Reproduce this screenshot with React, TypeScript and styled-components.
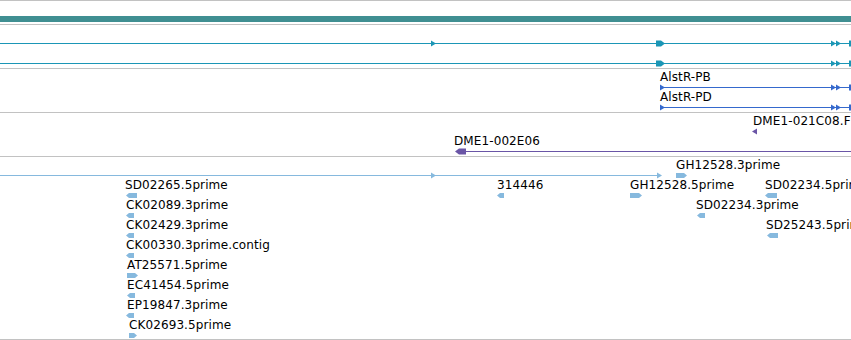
import styled, { createGlobalStyle } from 'styled-components';

const GlobalStyle = createGlobalStyle`
  html, body {
    margin: 0;
    padding: 0;
    background: #ffffff;
    overflow: hidden;
  }
`;

const colors = {
  rule: '#c2c2c2',
  scale: '#408f92',
  gene: '#1b96b6',
  mrna: '#3569cd',
  clone: '#6a55a6',
  est: '#86b9de',
  text: '#000000',
};

const Browser = styled.div`
  width: 851px;
  height: 339px;
  border-top: 1px solid ${colors.rule};
  display: flex;
  flex-direction: column;
  overflow: hidden;
  background: #fff;
`;

const Track = styled.div<{ $h: number }>`
  position: relative;
  flex: 0 0 auto;
  height: ${({ $h }) => $h}px;
  border-bottom: 1px solid ${colors.rule};
  overflow: hidden;
`;

const Canvas = styled.svg`
  position: absolute;
  left: 0;
  top: 0;
  width: 851px;
  height: 100%;
  display: block;
`;

const Label = styled.span<{ $x: number; $row: number }>`
  position: absolute;
  left: ${({ $x }) => $x}px;
  top: ${({ $row }) => $row * 20 + 1}px;
  font-family: 'DejaVu Sans', 'Liberation Sans', sans-serif;
  font-size: 12px;
  line-height: 14px;
  letter-spacing: 0.1px;
  color: ${colors.text};
  white-space: nowrap;
`;

// y is the top pixel row of the 1px feature line
const rowY = (row: number) => 18 + row * 20;

function HLine({ x1, x2, row, color }: { x1: number; x2: number; row: number; color: string }) {
  return <rect x={x1} y={rowY(row)} width={x2 - x1} height={1} fill={color} />;
}

function Tri({ x, row, dir = 1, color }: { x: number; row: number; dir?: 1 | -1; color: string }) {
  const y = rowY(row);
  const pts =
    dir === 1
      ? `${x},${y - 2.5} ${x + 5},${y + 0.5} ${x},${y + 3.5}`
      : `${x + 5},${y - 2.5} ${x},${y + 0.5} ${x + 5},${y + 3.5}`;
  return <polygon points={pts} fill={color} />;
}

function Wedge({ x, w, row, dir = 1, color }: { x: number; w: number; row: number; dir?: 1 | -1; color: string }) {
  const y = rowY(row);
  const t = 4;
  const pts =
    dir === 1
      ? `${x},${y - 2.5} ${x + w - t},${y - 2.5} ${x + w},${y + 0.5} ${x + w - t},${y + 3.5} ${x},${y + 3.5}`
      : `${x + w},${y - 2.5} ${x + t},${y - 2.5} ${x},${y + 0.5} ${x + t},${y + 3.5} ${x + w},${y + 3.5}`;
  return <polygon points={pts} fill={color} />;
}

function Est({ x, w, row, dir, color = colors.est }: { x: number; w: number; row: number; dir: 1 | -1; color?: string }) {
  const y = rowY(row);
  const t = 3;
  const pts =
    dir === 1
      ? `${x},${y - 2} ${x + w - t},${y - 2} ${x + w},${y + 0.5} ${x + w - t},${y + 3} ${x},${y + 3}`
      : `${x + w},${y - 2} ${x + t},${y - 2} ${x},${y + 0.5} ${x + t},${y + 3} ${x + w},${y + 3}`;
  return <polygon points={pts} fill={color} />;
}

function EndBar({ x, row, color }: { x: number; row: number; color: string }) {
  return <rect x={x} y={rowY(row) - 2.5} width={2} height={6} fill={color} />;
}

function RightEnd({ row, color }: { row: number; color: string }) {
  return (
    <>
      <Tri x={831} row={row} color={color} />
      <Tri x={836} row={row} color={color} />
      <EndBar x={849} row={row} color={color} />
    </>
  );
}

const ests: { label: string; x: number; lx?: number; w: number; row: number; dir: 1 | -1 }[] = [
  { label: 'GH12528.3prime', x: 676, w: 11, row: 0, dir: 1 },
  { label: 'SD02265.5prime', x: 126, lx: 125, w: 11, row: 1, dir: -1 },
  { label: '314446', x: 497, w: 7, row: 1, dir: -1 },
  { label: 'GH12528.5prime', x: 630, w: 12, row: 1, dir: 1 },
  { label: 'SD02234.5prime', x: 765, w: 12, row: 1, dir: -1 },
  { label: 'CK02089.3prime', x: 126, w: 8, row: 2, dir: -1 },
  { label: 'SD02234.3prime', x: 697, lx: 696, w: 8, row: 2, dir: -1 },
  { label: 'CK02429.3prime', x: 126, w: 8, row: 3, dir: -1 },
  { label: 'SD25243.5prime', x: 767, lx: 766, w: 11, row: 3, dir: -1 },
  { label: 'CK00330.3prime.contig', x: 126, w: 8, row: 4, dir: -1 },
  { label: 'AT25571.5prime', x: 127, w: 11, row: 5, dir: 1 },
  { label: 'EC41454.5prime', x: 127, w: 8, row: 6, dir: -1 },
  { label: 'EP19847.3prime', x: 126, lx: 127, w: 8, row: 7, dir: -1 },
  { label: 'CK02693.5prime', x: 129, w: 8, row: 8, dir: 1 },
];

export default function App() {
  return (
    <>
      <GlobalStyle />
      <Browser>
        <Track $h={23}>
          <Canvas shapeRendering="crispEdges">
            <rect x={0} y={15} width={851} height={6} fill={colors.scale} />
          </Canvas>
        </Track>

        <Track $h={43}>
          <Canvas>
            <HLine x1={0} x2={851} row={0} color={colors.gene} />
            <Tri x={431} row={0} color={colors.gene} />
            <Wedge x={656} w={9} row={0} color={colors.gene} />
            <RightEnd row={0} color={colors.gene} />
            <HLine x1={0} x2={851} row={1} color={colors.gene} />
            <Wedge x={656} w={9} row={1} color={colors.gene} />
            <RightEnd row={1} color={colors.gene} />
          </Canvas>
        </Track>

        <Track $h={43}>
          <Canvas>
            <HLine x1={661} x2={851} row={0} color={colors.mrna} />
            <Tri x={660} row={0} color={colors.mrna} />
            <RightEnd row={0} color={colors.mrna} />
            <HLine x1={661} x2={851} row={1} color={colors.mrna} />
            <Tri x={660} row={1} color={colors.mrna} />
            <RightEnd row={1} color={colors.mrna} />
          </Canvas>
          <Label $x={660} $row={0}>AlstR-PB</Label>
          <Label $x={660} $row={1}>AlstR-PD</Label>
        </Track>

        <Track $h={43}>
          <Canvas>
            <Tri x={752} row={0} dir={-1} color={colors.clone} />
            <HLine x1={462} x2={851} row={1} color={colors.clone} />
            <Wedge x={455} w={11} row={1} dir={-1} color={colors.clone} />
          </Canvas>
          <Label $x={753} $row={0}>DME1-021C08.F</Label>
          <Label $x={454} $row={1}>DME1-002E06</Label>
        </Track>

        <Track $h={182}>
          <Canvas>
            <HLine x1={0} x2={660} row={0} color={colors.est} />
            <Tri x={431} row={0} color={colors.est} />
            <Tri x={657} row={0} color={colors.est} />
            {ests.map((e) => (
              <Est key={e.label} x={e.x} w={e.w} row={e.row} dir={e.dir} />
            ))}
          </Canvas>
          {ests.map((e) => (
            <Label key={e.label} $x={e.lx ?? e.x} $row={e.row}>
              {e.label}
            </Label>
          ))}
        </Track>
      </Browser>
    </>
  );
}
